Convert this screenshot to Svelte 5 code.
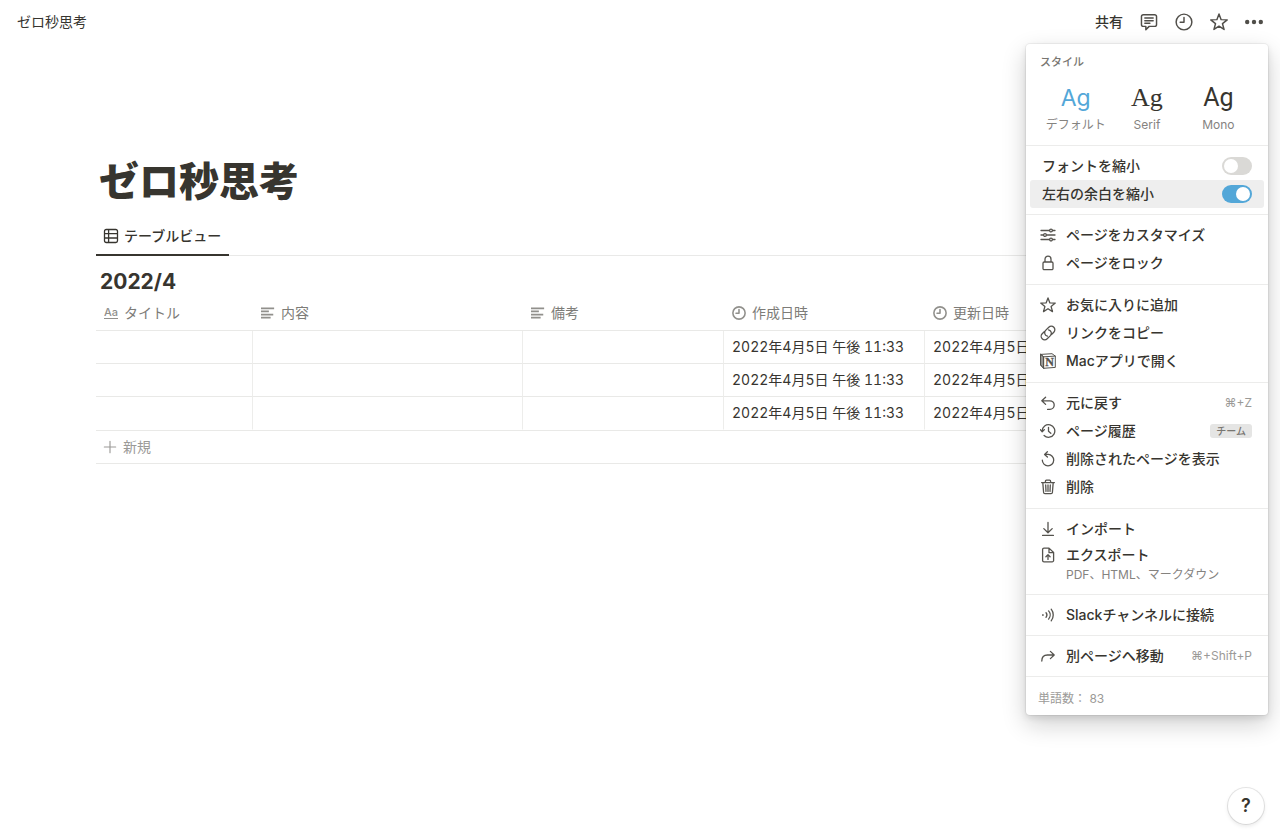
<script lang="ts">
  type MenuItem = {
    icon: string;
    label: string;
    hint?: string;
    badge?: string;
    note?: string;
  };

  const icons: Record<string, string> = {
    comment:
      'M3 1.5h10a1.7 1.7 0 0 1 1.7 1.7v7a1.7 1.7 0 0 1-1.7 1.7H8.2L5.2 14.8v-2.9H3a1.7 1.7 0 0 1-1.7-1.7v-7A1.7 1.7 0 0 1 3 1.5zM4.3 4.5h7.4M4.3 6.8h7.4M4.3 9.1h4.5',
    clock: 'M8 1a7 7 0 1 0 0 14A7 7 0 1 0 8 1zM8 4v4.3H4.6',
    star: 'M8 .9l1.9 5 5.4.2-4.2 3.4 1.4 5.1L8 11.7l-4.5 2.9 1.4-5.1L.7 6.1l5.4-.2z',
    sliders:
      'M1 3.5h8.6M12.4 3.5H15M1 8h2.6M6.4 8H15M1 12.5h8.6M12.4 12.5H15M11 2.1a1.4 1.4 0 1 0 0 2.8 1.4 1.4 0 1 0 0-2.8zM5 6.6a1.4 1.4 0 1 0 0 2.8 1.4 1.4 0 1 0 0-2.8zM11 11.1a1.4 1.4 0 1 0 0 2.8 1.4 1.4 0 1 0 0-2.8z',
    lock: 'M4.2 7h7.6a1.2 1.2 0 0 1 1.2 1.2v5.3a1.2 1.2 0 0 1-1.2 1.2H4.2A1.2 1.2 0 0 1 3 13.5V8.2A1.2 1.2 0 0 1 4.2 7zM5 7V4.2a3 3 0 0 1 6 0V7',
    link: 'M7.4 11.2A3.5 3.5 0 0 1 5.6 5.4l3.2-3.2a3.5 3.5 0 0 1 5 5l-2.3 2.3M8.6 4.8a3.5 3.5 0 0 1 1.8 5.8l-3.2 3.2a3.5 3.5 0 0 1-5-5l2.3-2.3',
    undo: 'M5.6 2.2L1.8 5.8l3.8 3.6M1.8 5.8h8.1a4.3 4.3 0 0 1 0 8.6H7.6',
    history: 'M2.2 8a6.3 6.3 0 1 1 1.9 4.5M.4 6.6L2.2 8.8l2.2-2.2M8.5 4.3v4l2.3 2',
    restore: 'M7.4 .8L4.6 3.4l2.8 2.6M4.8 3.4h3.4a5.7 5.7 0 1 1-5.9 5.7',
    trash:
      'M1.6 3.6h12.8M5.4 3.6V2.2A1 1 0 0 1 6.4 1.2h3.2a1 1 0 0 1 1 1v1.4M2.8 3.6l.8 9.9a1.3 1.3 0 0 0 1.3 1.2h6.2a1.3 1.3 0 0 0 1.3-1.2l.8-9.9M5.7 6l.3 6.4M8 6v6.4M10.3 6L10 12.4',
    import: 'M8 1.4v10M3.8 7.6L8 11.8l4.2-4.2M2.6 14.4h10.8',
    export:
      'M4 1.1h5l4.6 4.4v7.9a1.4 1.4 0 0 1-1.4 1.4H4a1.4 1.4 0 0 1-1.4-1.4V2.5A1.4 1.4 0 0 1 4 1.1zM9 1.3v4.4h4.4M8 12.4V7.8M5.9 9.7L8 7.6l2.1 2.1',
    signal:
      'M2.6 7.8h.6M2.6 8.2h.6M6 5.7a3.6 3.6 0 0 1 0 4.6M8.6 3.9a6.2 6.2 0 0 1 0 8.2M11.2 2.2a9.3 9.3 0 0 1 0 11.6',
    move: 'M1.8 13c0-4 2-6 5.6-6h6.4M10.4 3.4L14.2 7l-3.8 3.6',
    table:
      'M3.2 1.5h9.6a1.7 1.7 0 0 1 1.7 1.7v9.6a1.7 1.7 0 0 1-1.7 1.7H3.2a1.7 1.7 0 0 1-1.7-1.7V3.2a1.7 1.7 0 0 1 1.7-1.7zM1.5 5.6h13M1.5 10h13M5.6 1.5v13',
    text: 'M0 2.6h15M0 6.2h9M0 9.8h14M0 13.4h11',
    plus: 'M8 1.5v13M1.5 8h13'
  };

  const fontStyles = [
    { id: 'default', label: 'デフォルト' },
    { id: 'serif', label: 'Serif' },
    { id: 'mono', label: 'Mono' }
  ];

  const menuSections: MenuItem[][] = [
    [
      { icon: 'sliders', label: 'ページをカスタマイズ' },
      { icon: 'lock', label: 'ページをロック' }
    ],
    [
      { icon: 'star', label: 'お気に入りに追加' },
      { icon: 'link', label: 'リンクをコピー' },
      { icon: 'notion', label: 'Macアプリで開く' }
    ],
    [
      { icon: 'undo', label: '元に戻す', hint: '⌘+Z' },
      { icon: 'history', label: 'ページ履歴', badge: 'チーム' },
      { icon: 'restore', label: '削除されたページを表示' },
      { icon: 'trash', label: '削除' }
    ],
    [
      { icon: 'import', label: 'インポート' },
      { icon: 'export', label: 'エクスポート', note: 'PDF、HTML、マークダウン' }
    ],
    [{ icon: 'signal', label: 'Slackチャンネルに接続' }],
    [{ icon: 'move', label: '別ページへ移動', hint: '⌘+Shift+P' }]
  ];

  const columns = [
    { icon: 'title', label: 'タイトル' },
    { icon: 'text', label: '内容' },
    { icon: 'text', label: '備考' },
    { icon: 'clock', label: '作成日時' },
    { icon: 'clock', label: '更新日時' }
  ];

  const stamp = '2022年4月5日 午後 11:33';
  const rows = [1, 2, 3].map(() => ['', '', '', stamp, stamp]);

  let activeFont = $state('default');
  let smallText = $state(false);
  let fullWidth = $state(true);
</script>

{#snippet icon(name: string)}
  {#if name === 'notion'}
    <svg class="icon icon-notion" viewBox="0 0 16 16" aria-hidden="true">
      <path d="M.8 1.4L12 .7l3.3 2.4v11.3L3.6 15.3.8 12.2zM.8 1.4l2.8 2.4 11.7-.7M3.6 3.8v11.5" />
      <path class="side" d="M.8 1.4l2.8 2.4v11.5L.8 12.2z" />
      <text x="9.5" y="13.2" text-anchor="middle">N</text>
    </svg>
  {:else if name === 'title'}
    <span class="icon-title" aria-hidden="true">Aa</span>
  {:else}
    <svg class="icon icon-{name}" viewBox="0 0 16 16" aria-hidden="true">
      <path d={icons[name]} />
    </svg>
  {/if}
{/snippet}

<div class="page">
  <header class="topbar">
    <a class="breadcrumb" href="#top">ゼロ秒思考</a>
    <div class="actions">
      <button class="share">共有</button>
      <button aria-label="コメント">{@render icon('comment')}</button>
      <button aria-label="更新履歴">{@render icon('clock')}</button>
      <button aria-label="お気に入り">{@render icon('star')}</button>
      <button aria-label="メニュー">
        <svg class="dots" viewBox="0 0 18 18" aria-hidden="true">
          <circle cx="2.2" cy="9" r="2.2" />
          <circle cx="9" cy="9" r="2.2" />
          <circle cx="15.8" cy="9" r="2.2" />
        </svg>
      </button>
    </div>
  </header>

  <main>
    <h1>ゼロ秒思考</h1>
    <nav class="tabs">
      <button class="tab">
        {@render icon('table')}
        テーブルビュー
      </button>
    </nav>
    <h2>2022/4</h2>
    <div class="table-wrap">
      <table>
        <colgroup>
          <col class="col-title" />
          <col class="col-content" />
          <col class="col-note" />
          <col class="col-date" />
          <col />
        </colgroup>
        <thead>
          <tr>
            {#each columns as column}
              <th>
                <span class="head">{@render icon(column.icon)}{column.label}</span>
              </th>
            {/each}
          </tr>
        </thead>
        <tbody>
          {#each rows as row}
            <tr>
              {#each row as cell}
                <td>{cell}</td>
              {/each}
            </tr>
          {/each}
        </tbody>
      </table>
      <button class="new-row">{@render icon('plus')}新規</button>
    </div>
  </main>

  <aside class="menu">
    <section class="styles">
      <div class="menu-title">スタイル</div>
      <div class="style-list">
        {#each fontStyles as font}
          <button class:active={activeFont === font.id} onclick={() => (activeFont = font.id)}>
            <span class="sample {font.id}">Ag</span>
            <span class="style-name">{font.label}</span>
          </button>
        {/each}
      </div>
    </section>

    <section>
      <label class="row switch-row">
        フォントを縮小
        <input type="checkbox" bind:checked={smallText} />
      </label>
      <label class="row switch-row hovered">
        左右の余白を縮小
        <input type="checkbox" bind:checked={fullWidth} />
      </label>
    </section>

    {#each menuSections as items}
      <section class:group={items.length > 1}>
        {#each items as item}
          <button class="row" class:with-note={item.note}>
            {@render icon(item.icon)}
            <span class="label">
              {item.label}
              {#if item.note}<small>{item.note}</small>{/if}
            </span>
            {#if item.hint}<span class="hint">{item.hint}</span>{/if}
            {#if item.badge}<span class="badge">{item.badge}</span>{/if}
          </button>
        {/each}
      </section>
    {/each}

    <footer>単語数： 83</footer>
  </aside>

  <button class="help" aria-label="ヘルプ">?</button>
</div>

<style>
  :global(body) {
    background: #fff;
  }

  .page {
    position: relative;
    min-height: 100vh;
    overflow: hidden;
    color: #37352f;
    font-family: Inter, 'Noto Sans CJK JP', sans-serif;
    font-size: 14px;
    line-height: 20px;
  }

  button {
    padding: 0;
    border: 0;
    background: none;
    color: inherit;
    font: inherit;
    cursor: pointer;
  }

  .icon {
    flex: none;
    width: 16px;
    height: 16px;
    fill: none;
    stroke: currentColor;
    stroke-width: 1.3;
    stroke-linecap: round;
    stroke-linejoin: round;
  }

  .icon-notion {
    stroke-width: 1;
  }

  .icon .side {
    fill: currentColor;
    fill-opacity: 0.6;
  }

  .icon text {
    fill: currentColor;
    stroke: currentColor;
    stroke-width: 0.3;
    font: bold 12px 'Liberation Serif', serif;
  }

  .topbar {
    display: flex;
    align-items: center;
    justify-content: space-between;
    height: 44px;
    padding: 0 17px;
  }

  .breadcrumb {
    color: inherit;
    text-decoration: none;
  }

  .actions {
    display: flex;
    align-items: center;
    gap: 17px;
  }

  .actions button {
    display: flex;
  }

  .share {
    font-weight: 500;
  }

  .actions .icon {
    width: 18px;
    height: 18px;
    color: #504e49;
  }

  .dots {
    width: 18px;
    height: 18px;
    fill: #504e49;
  }

  main {
    padding: 114px 96px 0;
  }

  h1 {
    margin: 0;
    padding-left: 3px;
    font-size: 40px;
    font-weight: 900;
    line-height: 48px;
  }

  .tabs {
    display: flex;
    height: 39px;
    margin-top: 10px;
    border-bottom: 1px solid #e9e9e8;
  }

  .tab {
    display: flex;
    align-items: center;
    gap: 5px;
    box-sizing: border-box;
    height: 40px;
    padding: 2px 8px 0 7px;
    border-bottom: 2px solid #37352f;
    font-weight: 500;
  }

  h2 {
    margin: 11px 0 0;
    padding-left: 4px;
    font-size: 21px;
    font-weight: 700;
    line-height: 30px;
  }

  table {
    width: 100%;
    border-collapse: separate;
    border-spacing: 0;
    table-layout: fixed;
  }

  .col-title {
    width: 157px;
  }

  .col-content {
    width: 270px;
  }

  .col-note,
  .col-date {
    width: 201px;
  }

  th {
    height: 34px;
    padding: 0 8px 2px;
    box-sizing: border-box;
    border-bottom: 1px solid #e9e9e7;
    color: #7d7c78;
    font-weight: 400;
    text-align: left;
  }

  .head {
    display: flex;
    align-items: center;
    gap: 6px;
  }

  .head .icon {
    width: 14px;
    height: 14px;
    color: #91908c;
    stroke-width: 1.8;
  }

  .head .icon-text {
    stroke-linecap: butt;
    stroke-width: 2;
  }

  .icon-title {
    border-bottom: 1px solid #91908c;
    color: #91908c;
    font-size: 11px;
    font-weight: 500;
    line-height: 11px;
  }

  td {
    height: 32px;
    padding: 0 8px;
    border-right: 1px solid #ededeb;
    border-bottom: 1px solid #e9e9e7;
    font-variant-numeric: tabular-nums;
    white-space: nowrap;
  }

  td:last-child {
    border-right: 0;
  }

  tbody tr:last-child td {
    border-bottom-color: transparent;
  }

  .new-row {
    display: flex;
    align-items: center;
    gap: 6px;
    width: 100%;
    height: 34px;
    padding: 0 7px;
    border-top: 1px solid #e9e9e7;
    border-bottom: 1px solid #e9e9e7;
    color: #9b9a97;
  }

  .new-row .icon {
    width: 14px;
    height: 14px;
  }

  .menu {
    position: absolute;
    top: 44px;
    right: 12px;
    width: 242px;
    border-radius: 4px;
    background: #fff;
    box-shadow:
      0 0 0 1px rgba(15, 15, 15, 0.05),
      0 3px 6px rgba(15, 15, 15, 0.1),
      0 9px 24px rgba(15, 15, 15, 0.2);
  }

  section {
    padding: 6px 4px;
    border-bottom: 1px solid #ececeb;
  }

  .group {
    padding-bottom: 7px;
  }

  .styles {
    padding: 9px 14px 10px;
  }

  .menu-title {
    color: #787671;
    font-size: 11px;
    font-weight: 500;
    line-height: 18px;
  }

  .style-list {
    display: grid;
    grid-template-columns: repeat(3, 1fr);
    margin-top: 10px;
  }

  .style-list button {
    display: flex;
    flex-direction: column;
    align-items: center;
  }

  .sample {
    font-size: 23px;
    line-height: 34px;
  }

  .sample.serif {
    font-family: 'Liberation Serif', serif;
    font-size: 26px;
  }

  .sample.mono {
    font-family: Roboto, sans-serif;
    font-size: 25px;
  }

  .active .sample {
    color: #53a7d8;
  }

  .style-name {
    color: #85837f;
    font-size: 12px;
    line-height: 20px;
  }

  .row {
    display: flex;
    align-items: center;
    gap: 10px;
    box-sizing: border-box;
    width: 100%;
    height: 28px;
    padding: 0 12px 0 10px;
    border-radius: 3px;
    text-align: left;
    white-space: nowrap;
    cursor: pointer;
  }

  .row .icon {
    color: #55534e;
  }

  .label {
    flex: 1;
    font-weight: 500;
  }

  .with-note {
    align-items: flex-start;
    height: 44px;
    padding-top: 2px;
  }

  .with-note .icon {
    margin-top: 2px;
  }

  small {
    display: block;
    color: #85837f;
    font-size: 12px;
    font-weight: 400;
    line-height: 20px;
  }

  .switch-row {
    justify-content: space-between;
    padding-left: 12px;
    font-weight: 500;
  }

  .hovered,
  .row:hover {
    background: #eeeeee;
  }

  .switch-row input {
    display: flex;
    align-items: center;
    width: 30px;
    height: 18px;
    margin: 0;
    padding: 2px;
    box-sizing: border-box;
    border-radius: 9px;
    background: #dad9d6;
    appearance: none;
    cursor: pointer;
  }

  .switch-row input::before {
    content: '';
    width: 14px;
    height: 14px;
    border-radius: 50%;
    background: #fff;
  }

  .switch-row input:checked {
    justify-content: flex-end;
    background: #53a7d8;
  }

  .hint {
    color: #9b9a97;
    font-size: 12px;
  }

  .badge {
    padding: 0 6px;
    border-radius: 3px;
    background: #e5e5e4;
    color: #787671;
    font-size: 10px;
    font-weight: 500;
    line-height: 14px;
  }

  footer {
    padding: 12px 12px 6px;
    color: #9b9a97;
    font-size: 12px;
  }

  .help {
    position: absolute;
    right: 16px;
    bottom: 16px;
    width: 36px;
    height: 36px;
    border-radius: 50%;
    background: #fff;
    box-shadow:
      0 0 0 1px rgba(15, 15, 15, 0.1),
      0 2px 4px rgba(15, 15, 15, 0.1);
    font-size: 18px;
    font-weight: 600;
  }
</style>
